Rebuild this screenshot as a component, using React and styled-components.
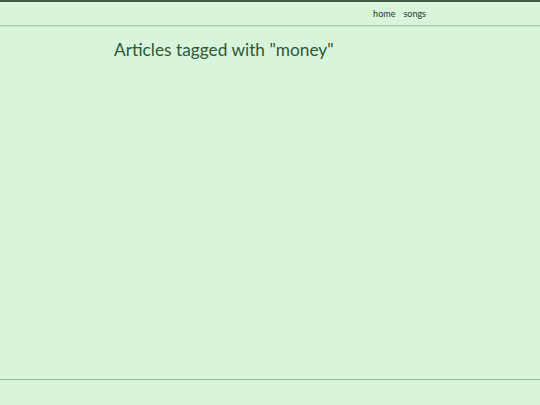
import React from 'react';
import styled, { createGlobalStyle } from 'styled-components';

const Global = createGlobalStyle`
  html, body {
    margin: 0;
    padding: 0;
    background: #d8f5dc;
    font-family: Lato, "Liberation Sans", sans-serif;
  }
`;

const Page = styled.div`
  min-height: 405px;
  display: flex;
  flex-direction: column;
  border-top: 2px solid #3f5c44;
  box-sizing: border-box;
`;

const Header = styled.header`
  height: 23px;
  border-bottom: 1px solid #a9c9ae;
  box-shadow: 0 1px 0 #c4e2c8;
`;

const Container = styled.div`
  width: 312px;
  margin: 0 auto;
  height: 100%;
`;

const Nav = styled.nav`
  display: flex;
  justify-content: flex-end;
  align-items: center;
  height: 100%;
  gap: 8px;
`;

const NavLink = styled.a`
  font-size: 9px;
  color: #2b332c;
  text-decoration: none;
`;

const Main = styled.main`
  flex: 1;
`;

const Title = styled.h1`
  margin: 13px 0 0;
  font-family: Lato, "Liberation Sans", sans-serif;
  font-weight: 400;
  font-size: 17.3px;
  color: #2f5735;
`;

const Footer = styled.footer`
  height: 25px;
  border-top: 1px solid #93b598;
`;

export default function App() {
  return (
    <>
      <Global />
      <Page>
        <Header>
          <Container>
            <Nav>
              <NavLink href="#">home</NavLink>
              <NavLink href="#">songs</NavLink>
            </Nav>
          </Container>
        </Header>
        <Main>
          <Container>
            <Title>Articles tagged with "money"</Title>
          </Container>
        </Main>
        <Footer />
      </Page>
    </>
  );
}
